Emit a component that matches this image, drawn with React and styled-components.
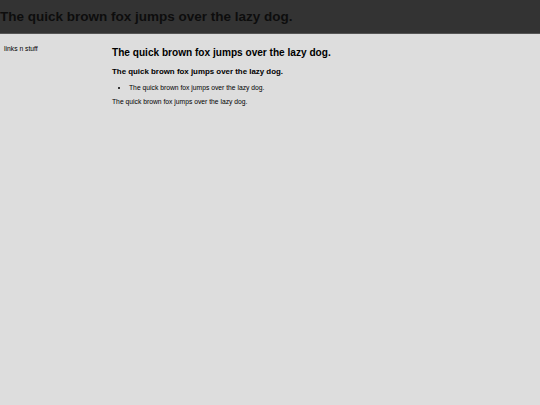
import React from 'react';
import styled, { createGlobalStyle } from 'styled-components';

const Global = createGlobalStyle`
  html, body {
    margin: 0;
    padding: 0;
    background: #dddddd;
    font-family: "Liberation Sans", Arial, sans-serif;
    color: #000;
  }
`;

const Page = styled.div`
  min-height: 405px;
  background: #dddddd;
`;

const Header = styled.header`
  height: 33px;
  background: #333333;
  border-bottom: 1px solid #555;
  display: flex;
  align-items: center;
  h1 {
    margin: 0;
    font-size: 13.5px;
    font-weight: bold;
    color: #0d0d0d;
  }
`;

const Body = styled.div`
  display: flex;
  flex-direction: row;
`;

const Sidebar = styled.nav`
  width: 108px;
  padding: 11px 0 0 4px;
  font-size: 6.75px;
`;

const Main = styled.main`
  flex: 1;
  padding-top: 13px;
  h2 {
    margin: 0 0 9px;
    font-size: 10.1px;
    font-weight: bold;
  }
  h3 {
    margin: 0 0 8px;
    font-size: 7.9px;
    font-weight: bold;
  }
  ul {
    margin: 0 0 7px;
    padding-left: 17px;
    font-size: 6.75px;
  }
  p {
    margin: 0;
    font-size: 6.75px;
  }
`;

export default function App() {
  const text = 'The quick brown fox jumps over the lazy dog.';
  return (
    <Page>
      <Global />
      <Header>
        <h1>{text}</h1>
      </Header>
      <Body>
        <Sidebar>links n stuff</Sidebar>
        <Main>
          <h2>{text}</h2>
          <h3>{text}</h3>
          <ul>
            <li>{text}</li>
          </ul>
          <p>{text}</p>
        </Main>
      </Body>
    </Page>
  );
}
